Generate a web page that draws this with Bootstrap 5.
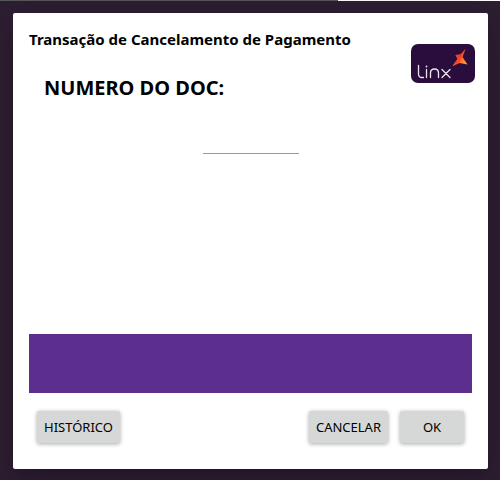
<!DOCTYPE html>
<html lang="pt-BR">
<head>
<meta charset="utf-8">
<meta name="viewport" content="width=device-width, initial-scale=1">
<title>Transação de Cancelamento de Pagamento</title>
<link href="https://cdn.jsdelivr.net/npm/bootstrap@5.3.0/dist/css/bootstrap.min.css" rel="stylesheet">
<style>
body { font-family: "Noto Sans", "Open Sans", sans-serif; background: #2e1e33; color: #000; }
.top-line { height: 1px; background: linear-gradient(to right, #58595b 0 338px, #fff 338px); }
.dialog-area { padding: 12px 12px 11px 13px; }
.dialog-box { border-radius: 2px; padding: 16px; box-shadow: 0 11px 15px -7px rgba(0,0,0,.2), 0 9px 46px 8px rgba(0,0,0,.14); }
.dialog-title { font-size: 15px; line-height: 20px; }
.brand-logo { width: 64px; height: 39px; margin: 15px -3px 0 0; }
.field-label { font-size: 20px; line-height: 28px; margin: 25px 0 0 15px; }
.doc-input { width: 96px; height: 28px; margin-top: 24px; border: 0; border-bottom: 1px solid #999; outline: 0; font-size: 16px; background: transparent; }
.message-band { height: 59px; background: #5c2e8e; }
.actions { padding: 18px 8px 10px; gap: 12px; }
.action-btn { --bs-btn-bg: #d6d8d7; --bs-btn-color: #000; --bs-btn-hover-bg: #c8cac9; --bs-btn-border-width: 0; --bs-btn-border-radius: 2px; --bs-btn-font-size: 13px; --bs-btn-line-height: 16px; --bs-btn-padding-x: 7px; --bs-btn-padding-y: 8px; min-width: 64px; box-shadow: 0 1px 4px rgba(0,0,0,.35); }
</style>
</head>
<body class="min-vh-100 d-flex flex-column">
<div class="top-line"></div>
<div class="dialog-area flex-grow-1 d-flex">
  <main class="dialog-box bg-white flex-grow-1 d-flex flex-column">
    <div class="d-flex justify-content-between align-items-start">
      <div>
        <h1 class="dialog-title fw-bold mb-0">Transação de Cancelamento de Pagamento</h1>
        <label class="field-label fw-bold d-block" for="doc">NUMERO DO DOC:</label>
      </div>
      <svg class="brand-logo flex-shrink-0" viewBox="0 0 64 39" role="img" aria-label="Linx">
        <defs><linearGradient id="flame" x1="0" y1="0" x2="1" y2="1"><stop offset=".2" stop-color="#e8432f"/><stop offset=".55" stop-color="#ff6427"/><stop offset="1" stop-color="#ffb62e"/></linearGradient></defs>
        <rect width="64" height="39" rx="7" fill="#2a0c3d"/>
        <g fill="none" stroke="#e9e4ec" stroke-width="1.3" stroke-linecap="round" stroke-linejoin="round">
          <path d="M7.500 21.500V30q0 3.500 3.500 3.500h1.500M15.500 25.500v8M19.500 33.500V29q0-4 4-4t4 4V33.500M31 25.500l8 8M39 25.500l-8 8"/>
        </g>
        <circle cx="15.500" cy="22.500" r=".9" fill="#e9e4ec"/>
        <path fill="url(#flame)" d="M54.500 5L51.500 13L56.500 20.500L48.500 19L41.500 22L46.500 15L44.500 11L49.500 10.500Z"/>
        <path fill="#e8412f" d="M54.500 5L49.500 10.500L44.500 11L46.500 14L50 13.500Z"/>
        <path fill="#f9432b" d="M46.500 15L41.500 22L48 19L50.500 13Z"/>
      </svg>
    </div>
    <input class="doc-input align-self-center p-0" id="doc" type="text">
    <div class="message-band mt-auto" role="status"></div>
    <div class="actions d-flex">
      <button class="btn action-btn me-auto" type="button">HISTÓRICO</button>
      <button class="btn action-btn" type="button">CANCELAR</button>
      <button class="btn action-btn" type="button">OK</button>
    </div>
  </main>
</div>
<script src="https://cdn.jsdelivr.net/npm/bootstrap@5.3.0/dist/js/bootstrap.bundle.min.js"></script>
</body>
</html>
